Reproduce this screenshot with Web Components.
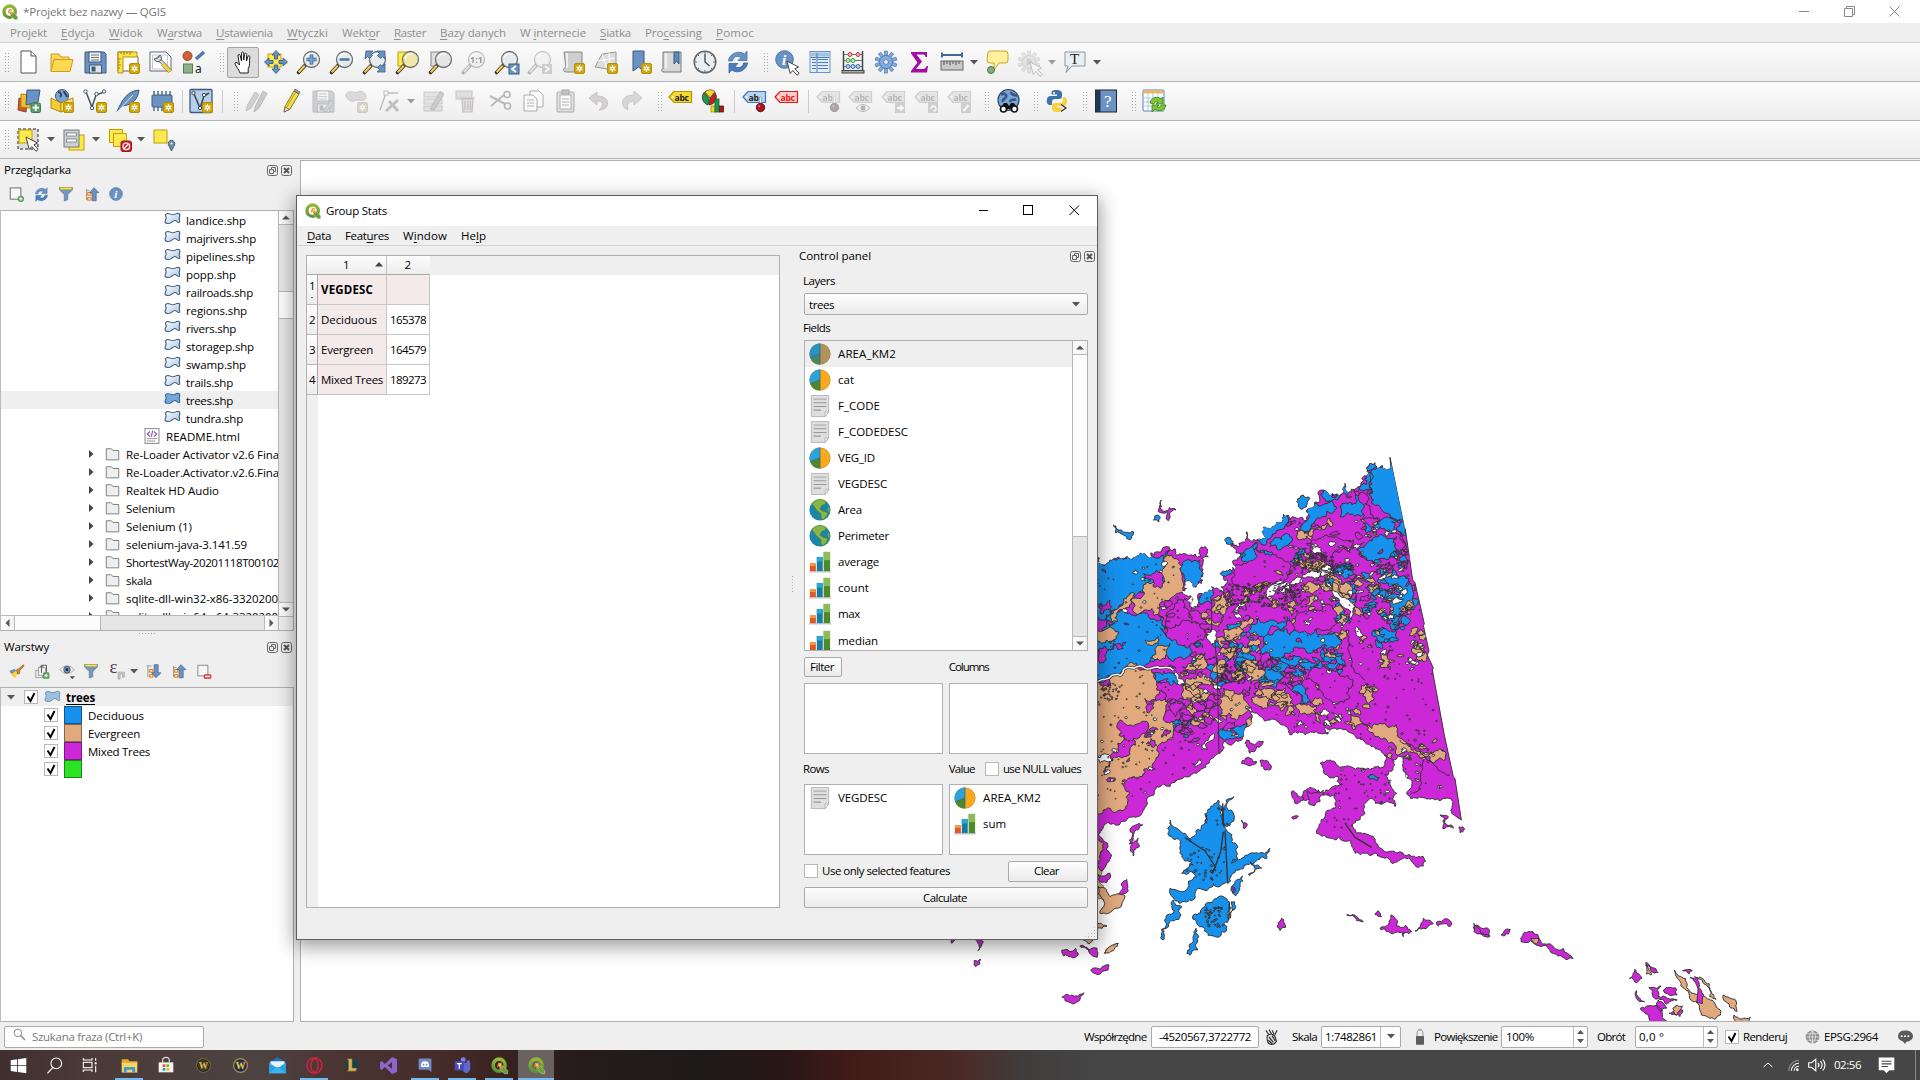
<!DOCTYPE html>
<html lang="pl"><head><meta charset="utf-8"><title>*Projekt bez nazwy — QGIS</title>
<style>
html,body{margin:0;padding:0;width:1920px;height:1080px;overflow:hidden;background:#efefef}
body{font:11.5px/16px "Open Sans","Noto Sans","Liberation Sans",sans-serif;color:#000}
</style></head><body>
<qg-desktop></qg-desktop>
<script>
const ctx=document.createElement('canvas').getContext('2d');
function define(name,css,html,after){
  customElements.define(name,class extends HTMLElement{
    connectedCallback(){
      if(this.shadowRoot)return;
      const r=this.attachShadow({mode:'open'});
      r.innerHTML='<style>*{box-sizing:border-box}'+css+'</style>'+(typeof html==='function'?html(this):html);
      if(after)after(this,r);
    }
  });
}
/* text run with a fixed advance width */
define('qg-text',':host{display:inline-block;white-space:pre;flex:none} ::slotted(u){text-underline-offset:2px;text-decoration-thickness:1px}','<slot></slot>',el=>{
  const w=+el.getAttribute('w'); if(!w)return;
  const cs=getComputedStyle(el),s=el.textContent;
  ctx.font=`${cs.fontWeight} ${cs.fontSize} ${cs.fontFamily}`;
  el.style.letterSpacing=((w-ctx.measureText(s).width)/s.length).toFixed(3)+'px';
  el.style.width=w+'px';
});
const T=(s,w,st='')=>`<qg-text w="${w}" style="${st}">${s}</qg-text>`;
/* row of [x, width, html] items laid out one after another */
function flow(items,x0=0){let e=x0,o='';for(const [x,w,h,st] of items){o+=`<div style="flex:none;display:flex;align-items:center;margin-left:${(x-e).toFixed(1)}px;width:${w}px;${st||''}">${h}</div>`;e=x+w}return o}

/* ---------- icons ---------- */
const P=(d,f='none',s='none',w=1,x='')=>`<path d="${d}" fill="${f}" stroke="${s}" stroke-width="${w}" ${x}/>`;
const R=(x,y,w,h,f='none',s='none',r=0,sw=1)=>`<rect x="${x}" y="${y}" width="${w}" height="${h}" rx="${r}" fill="${f}" stroke="${s}" stroke-width="${sw}"/>`;
const C=(x,y,r,f='none',s='none',w=1)=>`<circle cx="${x}" cy="${y}" r="${r}" fill="${f}" stroke="${s}" stroke-width="${w}"/>`;
const G=(op,s)=>`<g opacity="${op}" style="filter:grayscale(.85)">${s}</g>`;
const badge=R(13.5,13.5,10,10,'#d0a50d','#b58f00',1.5)+P('M18.5 15v7M15.5 16.8l6 3.4M21.5 16.8l-6 3.4','none','#fff',1.2)+C(18.5,18.5,1.9,'#fff')+C(18.5,18.5,.8,'#d0a50d');
const mag=(f='#e6ebee')=>P('M1.5 22.5l7-7.5','none','#333',3.6,'stroke-linecap="round"')+P('M1.7 22.2l6-6.4','none','#fcd04b',2)+C(14.5,9.5,8,f,'#6d6d6d',1.3)+P('M9 8a6 6 0 0 1 8-4','none','#fff',1.3);
const cur=(x,y)=>`<g transform="translate(${x} ${y})">`+P('M0 0l3.2 12.5 2.6-3 4.2 4.8 2.2-2-4.3-4.5 3.6-1.8z','#fff','#444',1)+'</g>';
const fold=P('M1 21V4h8l2 3h8v3','#fbd65b','#c99c25',1)+P('M1 21.5l3-12h19l-3 12z','#fcd94f','#c99c25',1);
const disk=P('M2 2h19l2 2v19H2z','#6a93c4','#3d5a7d',1)+R(6,2,12,10,'#f2f2f2','#3d5a7d')+P('M8 5h8M8 7.5h8M8 10h8','none','#777',1)+R(6.5,15,12,8,'#e4e4e4','#3d5a7d')+R(8.5,16.5,4,5,'#3d5a7d');
const tag=(f,s,c,t='abc')=>P('M1 8l5-5.5h17.5v11H6z',f,s,1.2)+C(4.6,8,1,'#fff')+`<text x="6.5" y="11.6" font-family="Open Sans" font-weight="700" font-size="8.6" fill="${c}" letter-spacing="-.3">${t}</text>`;
const therm=P('M17.5 8h2v7h-2z','#eee','#999',.7)+C(18.5,18.5,4.2,'#a01822','#7a1018')+C(17.3,17.3,1,'#e77');
const tblue='#6a93c4',dk='#3b5a80';
const sqb=R(14,14,10,10,'#999');
const gear=(c,s,r=9)=>{let o='';for(let i=0;i<10;i++)o+=`<rect x="-1.5" y="-${r+2}" width="3" height="6" fill="${c}" stroke="${s}" stroke-width=".6" transform="translate(12 12) rotate(${i*36})"/>`;return o+C(12,12,r-2.5,c,s,.8)+C(12,12,2.4,'#e8eef6',s,.8)};
const refresh=P('M2.5 11C3 4 12-.5 18.5 4l2.5-3v9.500h-9l3-3C11 5 7 7 6.500 11z',tblue,'#4774aa',.8)+P('M21.500 13c-.5 7-9.500 11.500-16 7L3 23v-9.500h9l-3 3c4 2.500 8 .5 8.500-3.500z','#4a7dba','#38669f',.8);
const pencil=P('M6 23l1-5.500L16 2l5 3L12 20z','#f2e04c','#8b7a14',1)+P('M8.500 18.500L17.500 3.500','none','#b49c1c',1)+P('M6 23l1-5 4.500 2.500z','#f3e3c5','#555',.7)+P('M16 2l5 3 1-2-5-3z','#999','#555',.6);
const globe=C(11.500,11,10.500,'#7ea4d2','#26486f',1.200)+P('M4 6c3-3 6 0 5 2s-4 2-3 5M14 3c0 3 4 3 6 4M19 10c-2 2-5-1-6 3','none','#37598a',2.600);
const Qi='<defs><linearGradient id="qg" x2="0" y2="1"><stop offset="0" stop-color="#94b83a"/><stop offset="1" stop-color="#5b9632"/></linearGradient></defs>'+C(11.500,11.500,8.500,'none','url(#qg)',5)+P('M12.500 12.500h4.500l6.500 6.500v4.500h-4.500l-6.500-6z','#6a9f37','#fff',.5)+P('M10 8h6l-3 3 4 4-2 2-4-4-2.500 2.500z','#ee8a3c')+C(13,11,2,'#f6c95a');
const PB='M3 3.500c4-3 7 2.500 11 1 3-1 4-3.500 7-2 2.500 1.500 1 5 .5 7.500s2 7 0 8-4-3.500-6-3.500c-3 0-5 5-8 5-2.500 0-5.500 1-6-2.500-.4-3 2-5 1.500-7.500C2.600 7 1 5 3 3.500z';
const pie=(a,b,g)=>C(12,12,11.500,b)+P('M12 12V.5A11.500 11.500 0 0 0 1.200 16z',a)+P('M12 12L1.200 16A11.500 11.500 0 0 0 12 23.500z',g)+P('M12 .5v23M12 12L1.200 16','none','#35607a',.8)+C(12,12,11.200,'none','#6a8a6a66',.8);
const IC={
 q:Qi,
 newf:P('M4 1h10l5 5v17H4z','#fff','#555',1)+P('M14 1v5h5','#eee','#555',1),
 open:fold, save:disk,
 layout:P('M2 2h15l5 5v14H2z','#fff','#666')+P('M2 2h19v5H7v16H2z','#fbe14c','#b89400')+P('M5 2v2M8 2v3M11 2v2M14 2v3M2 9h3M2 12h2M2 15h3M2 18h2','none','#8a6d00',.8)+badge,
 layman:P('M1 2h16l5 5v14H1z','#fff','#666')+R(3.5,5,15,14,'none','#b7c9e5')+P('M8 7l12 13','none','#666',3.500)+P('M8 7l12 13','none','#ddd',2)+P('M14 14l7 7.500','none','#a58a2a',4.500)+P('M14 14l7 7.500','none','#f0d050',3)+P('M5 9a4 4 0 0 0 6 2 4 4 0 0 0 0-6l-2 3z','#ddd','#555',1),
 style:C(5.500,6,4.500,'#cf6136','#9b4322')+P('M14 9l8-7','none','#4d79ad',3.500)+R(1.500,14,9,9,'#8bb18c','#567c57')+'<text x="13" y="22.500" font-family="Noto Sans" font-size="12" fill="#222">a</text>',
 hand:P('M9 23C8 19 3.500 15 4 13c1-1.300 3 0 4.500 2L7 6c-.2-2 1.700-2 2.200-.5L10.500 11V3.500c0-2 2.200-2 2.200 0V10l.8-5.500c.3-1.900 2.300-1.600 2.200.3L15.500 11l1.300-4.300c.5-1.700 2.200-1.200 2 .4-.7 5.400.6 8-1.600 11.700V23z','#fff','#111',.95),
 pan:R(4,4,13,13,'#fce94f','#c4a000')+[0,90,180,270].map(a=>`<g transform="rotate(${a} 12 12)">`+P('M12 .5l4 4.500h-2.500v4h-3V5H8z',tblue,dk,.9)+'</g>').join(''),
 zin:mag()+P('M14.500 4.500v10M9.500 9.500h10','none',dk,3.600)+P('M14.500 5v9M10 9.500h9','none','#7ba3d4',2),
 zout:mag()+P('M9.500 9.500h10','none','#4d79ad',2.600),
 zfull:mag()+P('M3 1h7L7.500 3.500l2 2-3 3-2-2L2 9zM22 1v8l-2.500-2.500-2 2-3-3 2-2L14 1zM22 22h-8l2.500-2.500-2-2 3-3 2 2L22 14z',tblue,dk,.8),
 zsel:R(2,2,12,14,'#fce94f','#c4a000')+mag('#efe8a8'),
 zlay:R(2,2,12,14,'#ddd','#888')+mag('#e4e4e4'),
 znat:G(.4,mag()+'<text x="8" y="13" font-weight="700" font-family="Open Sans" font-size="9">1:1</text>'),
 zlast:mag()+R(14,14,10,10,tblue,dk)+P('M21 16l-4 3 4 3','none','#fff',1.800),
 znext:G(.35,mag()+R(14,14,10,10,'#888')+P('M17 16l4 3-4 3','none','#fff',1.800)),
 nmap:P('M3 2h18v20H6c-5 0-4-5-1-4z','#cfcfcf','#888')+P('M6 3v15','none','#eee',2)+badge,
 n3d:P('M1 17L8 4l14-2v14l-9 3z','#ddd','#999')+P('M4 11l17-3M8 4l5 14M15 3l1 14','none','#fff',1)+badge,
 bm:P('M5 1h11v20l-5.500-4L5 21z',tblue,dk)+badge,
 bms:P('M3 2h18v20H4c-3 0-3-3-1-3z','#d8d8d8','#777')+P('M6 3v15','none','#f2f2f2',2)+P('M14 2h5v12l-2.500-3-2.500 3z','#5b8bc4',dk),
 clock:C(12,12,10.800,'#e9eef2','#666',1.500)+P('M12 4v8l4.500 4','none','#444',1.300)+P('M12 2v2M12 20v2M2 12h2M20 12h2M5 5l1 1M18 18l1 1M5 19l1-1M18 6l1-1','none','#568',1),
 refresh,
 ident:C(9.500,9.500,8.800,tblue,'#4774aa')+'<text x="7" y="15" font-family="Liberation Serif" font-style="italic" font-weight="700" font-size="15" fill="#fff">i</text>'+cur(12,11),
 attr:R(2,1.500,20,21,'#e2edf8',tblue)+R(3,2.500,18,4,'#a3c2e2')+P('M4 9.500h4M10 9.500h10M4 12.500h4M10 12.500h10M4 15.500h4M10 15.500h10M4 18.500h4M10 18.500h10M9 3v19M3 7.500h18','none','#4a7dba',1),
 abacus:P('M2.500 1v21M21.500 1v21','none','#444',1.500)+R(1,20.500,22,2.500,'#aaa','#444')+P('M3 4.500h18M3 10.500h18M3 16.500h18','none','#555',.8)+C(9,4.500,2,'#f9b5b5','#b33')+C(17,4.500,2,'#f9b5b5','#b33')+C(7,10.500,2,'#c3ecc3','#393')+C(12,10.500,2,'#c3ecc3','#393')+C(7,16.500,2,'#bcd6f2','#36a')+C(12,16.500,2,'#bcd6f2','#36a')+C(17,16.500,2,'#bcd6f2','#36a'),
 gear:gear('#83abdc','#4571a8'),
 sigma:P('M4 2h16v5h-1.500c-.5-2-1-2.500-3-2.500H9.500L15 11.500 9 19h7c2 0 3-1 3.500-3H21l-1 6.500H4V21l6.500-8.500L4 3.500z','#a30da3'),
 meas:P('M2 5h20M2 2.500v5M22 2.500v5','none','#45688f',2)+R(1,11,22,9,'#c9c9c9','#666')+P('M4 11v4M7 11v3M10 11v4M13 11v3M16 11v4M19 11v3','none','#555',1),
 tip:P('M3 2.500Q3 1 5 1h15q3 0 3 3v6q0 3-3 3h-6l-5 7v-7H5q-3 0-3-3z','#fdf1a0','#c9a520')+C(6,20,3.500,'#7fae7a','#4c7a4c'),
 act:G(.3,gear('#bbb','#777')+P('M10 8l6 4-6 4z','#777')+cur(13,12)),
 annot:P('M2 2h20v14H9l-6 6.500 2-6.500H2z','#e9eff3','#8b98a3')+'<text x="7" y="14" font-family="Liberation Serif" font-weight="400" font-size="15" fill="#222">T</text>',
 dsm:P('M2 9l8 2-1 12-8-2z','#cf5a28','#843')+P('M4 5l10 1-1 13-9-1z','#f0c02c','#a80')+P('M10 1h13l-2 12-12 3z',tblue,dk)+R(14,14,9.500,9.500,'#5a9e6d','#3d7a4e',1.500)+P('M18.700 15.500v6.500M15.500 18.700h6.500','none','#fff',1.800),
 gpkg:C(12,7,6.500,'#7ea4d2',dk)+P('M8 3c3 0 4 3 2 5M14 2c0 3 3 3 3 6','none','#26486f',2)+P('M1 9l10 5v9L1 19z','#f4c93a','#b08a10')+P('M11 14L23 9v9l-12 5z','#fbe66b','#b08a10')+badge,
 shp:P('M3 3l6 15 4-12 8-3','none','#456',1.500)+C(2.500,2.500,1.700,'#fff','#456')+C(9,19,1.700,'#fff','#456')+C(13.500,5,1.700,'#fff','#456')+C(21,2.500,1.700,'#fff','#456')+badge,
 feather:P('M1 23C6 10 12 2 23 1c-1 9-6 15-17 16z',tblue,dk)+P('M1 23L17 6','none','#dbe7f5',1)+badge,
 chip:R(2,6,20,12,tblue,dk,1)+P('M4 2v4M8 2v4M12 2v4M16 2v4M20 2v4M4 18v4M8 18v4M12 18v4','none',dk,1.300)+badge,
 vlay:R(1,.5,22,23,'#b8cde8',dk,1,1.300)+P('M5 5l6 14 4-12 5-3','none','#345',1.500)+C(4.500,4,1.700,'#fff','#345')+C(11,19,1.700,'#fff','#345')+C(15,6,1.700,'#fff','#345')+badge,
 pens:G(.5,P('M1 22l1.500-6L10 3l4 2.500-8 13.500z','#c5a5a5','#988')+P('M9 23l1.500-6L18 2l4 2.500L14 19z','#b99','#877')),
 pencil,
 dsave:G(.35,disk+P('M12 22l8-11 3 2-8 10z','#999','#555')),
 dpoly:G(.4,P('M2 5c5-5 8 0 12-2s8 1 8 5-4 4-7 3-5 2-8 1-6-5-5-7z','#a8b5a0','#787')+badge),
 node:G(.4,P('M3 21L9 4h12','none','#666',1.300)+R(7,2,4,4,'#fff','#666')+P('M9 22l12-11M12 12l9 10','none','#777',3)),
 mfeat:G(.4,R(2,3,18,5,'#c8ccaa','#886')+R(2,10,18,5,'#c8ccaa','#886')+R(2,17,18,5,'#c8ccaa','#886')+P('M8 20L18 3l4 2-10 16z','#a88','#766')),
 trash:G(.4,R(2,2,16,8,'#cbb','#977')+P('M5 9h16M8 10h11l-1 13H9zM11 12v9M14 12v9M16.500 12v9','#dbb','#a66',1.200)),
 cut:G(.45,P('M2 7l15 8M3 17L16 6','none','#777',2)+C(19.500,17,3,'none','#766',1.600)+C(19,5.500,3,'none','#766',1.600)),
 copy:G(.5,P('M9 2h9l4 4v12H9z','#fff','#666')+P('M3 6h9l4 4v12H3z','#fff','#666')+P('M6 11h7M6 14h7M6 17h7','none','#777',1)),
 paste:G(.5,R(3,3,17,20,'#ccc','#666',1)+R(6,6,11,14,'#fff','#777')+R(8,1,7,4,'#999','#555')+P('M8 10h7M8 13h7M8 16h7','none','#777',1)),
 undo:G(.35,P('M2 9l8-6v4c9 0 12 5 10 10-1 3-5 4-8 4 6-5 4-9-2-9v4z','#b87','#766')),
 redo:G(.35,P('M22 9l-8-7v4C5 6 1 11 3 16c1 3 3 4 5 5-2-5 1-9 6-9v4z','#8a8','#676')),
 abc:tag('#f5d830','#b89400','#222'),
 diag:P('M9 9V1.500A8 8 0 0 0 3 3.500z','#fcd520','#333',.6)+P('M9 9l5-6.500A8 8 0 0 0 4 3z','#fcd520','#333',.6)+P('M8 9.500L3 3.500A8 8 0 0 0 7 16z','#1a9a4a','#333',.8)+P('M9 9.500l5-6A8 8 0 0 1 8 16z','#d11c1c','#333',.8)+R(10,17,4,6,'#fcd520','#a80',0,.8)+R(14,10,4,13,'#1a9a4a','#063',0,.8)+R(18.500,17,4,6,'#b81414','#611',0,.8),
 abp:tag('#b9d4f3','#3f76c0','#222','ab')+therm,
 abr:tag('#ffc9c9','#e01b1b','#e01b1b'),
 l1:G(.4,tag('#cfcba0','#997','#555','ab')+therm),
 l2:G(.4,tag('#cfcba0','#997','#555')+P('M8 19q7-7 14 0-7 7-14 0z','#fff','#555')+C(15,19,2.500,'#555')),
 l3:G(.4,tag('#cfcba0','#997','#555')+sqb+P('M16 19h5M19 16.500l3 2.500-3 2.500','none','#fff',1.800)),
 l4:G(.4,tag('#cfcba0','#997','#555')+sqb+P('M17 20a2.500 2.500 0 1 1 2 2','none','#fff',1.600)),
 l5:G(.4,tag('#cfcba0','#997','#555')+sqb+P('M16.500 22l5-6','none','#fff',2)),
 meta:globe+P('M7 14h3l2 3 2-3h3l4 6H3z','#111')+C(6.500,20,3,'#fff','#111',1.600)+C(17.500,20,3,'#fff','#111',1.600),
 py:P('M10 1c-4.500 0-4.500 2-4.500 4.500H11V7H4C0 7-.5 16 3.500 16H6v-3c0-2 1-3 3-3h4c2 0 3-1 3-3V5c0-3-2-4-6-4z','#3b74ab')+P('M11 23c4.500 0 5-2 5-4.500h-5V17h7c4 0 4-9 .5-9H17v3c0 2-1 3-3 3H9c-2 0-3 1-3 3v2c0 3 2 4 5 4z','#fbd040')+C(8,4,1,'#fff')+P('M15 15.500l5 3.500-5 3.500','none','#333',1.300),
 help:R(1.500,1,21,22,tblue,'#222')+R(1.500,1,5,22,'#23364f')+'<text x="10" y="18" font-family="Liberation Serif" font-size="17" fill="#fff">?</text>',
 gs:R(1,1,21,21,'#fff','#4a86b8',1)+R(1.500,1.500,20,3,'#f5b45a')+P('M1 9h21M1 13h21M1 17h21M6 4v18M11 4v18M16 4v18','none','#a9cbe3',1)+P('M8 14c1-6 8-7 11-4l2-2v7h-7l2-2c-2-1-4 0-4 2z','#7dc832','#3f7d14',.8)+P('M24 16c-1 6-8 7-11 4l-3 3v-7h7l-2 2c2 1 4 0 4-2z','#7dc832','#3f7d14',.8),
 sel:R(1,1,20,20,'#ddd','#222').replace('/>',' stroke-dasharray="3 2"/>')+R(2,2,13,13,'#fce94f','#c4a000')+cur(9,9),
 form:R(7,7,15,15,'#fce94f','#c4a000')+R(2,2,15,17,'#ccd0d6','#6f7b86')+R(4.500,5,10,3,'#fff','#777',0,.8)+R(4.500,11,10,3,'#fff','#777',0,.8),
 desel:R(1.500,1.500,13,13,'#fce94f','#c4a000')+R(5.500,5.500,13,13,'#fce94f','#c4a000')+R(13,13,10.500,10.500,'#d8232a','#8e1217',2)+C(18.300,18.300,3.300,'none','#fff',1.200)+P('M16 20.700l4.500-4.700','none','#fff',1.200),
 selloc:R(2,2,13,13,'#fce94f','#c4a000')+P('M19.500 23l-3-6a3.300 3.300 0 1 1 6 0z','#6c8ea0','#486675')+C(19.500,15.500,1,'#fff'),
 addsel:R(2,1.500,17,18,'#f7f7f7','#777',0,1.700)+C(19,19,4.500,'#7ab07a','#3f7a3f')+P('M19 16.500v5M16.500 19h5','none','#fff',1.500),
 filter:P('M1 1h22v4l-8 8v9l-6 2V13L1 5z','#7397c0','#4b6c94')+R(2,1,20,3.500,'#fce94f','#b8a030'),
 coll:P('M4 3v18M4 6h5M4 18h5','none','#888',1.300)+R(6,9,5,4,'#fff','#f57900',0,1.700)+R(6,17,5,4,'#fff','#f57900',0,1.700)+P('M16 1l8 8h-4.500v13h-6.500V9h-4z',tblue,dk),
 expd:P('M1 3h8M3 3v18M4 12h4','none','#888',1.300)+R(6,9,5,4,'#fff','#f57900',0,1.700)+R(6,17,5,4,'#fff','#f57900',0,1.700)+P('M13 1h6.500v13h4.500l-8 8-7-8h4z',tblue,dk),
 info:C(12,12,11,tblue,'#4774aa')+'<text x="9" y="18.500" font-family="Liberation Serif" font-style="italic" font-weight="700" font-size="19" fill="#fff">i</text>',
 brush:P('M1 11l8-3 5 6-5 8z','#e8433a')+P('M3 17l8-7 4 5-6 7z','#fcd33a')+P('M1 11l8-3 2 3-8 4z','#5a9bd5')+P('M12 9l3-1 8-7 1 2-7 8v4l-3 1z','#d18b2f','#8a5312'),
 grp:R(3,10,11,12,'#eee','#777')+R(7,6,11,12,'#eee','#777')+P('M12 14V2M9 5l3-3 3 3M12 2h8v12','none','#556',1.500)+R(15,14,9,9,'#6fae74','#3f7a3f',1)+P('M19.500 16v5M17 18.500h5','none','#fff',1.500),
 eye:P('M1 10Q12-2 23 10 12 22 1 10z','#f3f3f3','#888')+C(12,10,5,'#6f94ba','#345')+C(12,10,2,'#123')+P('M16 20h8l-4 4z','#444'),
 eps:'<text x="-1" y="15" font-family="Liberation Serif" font-size="30" fill="#5b3566">ε</text>'+P('M13 13h10v8h-3v-5h-4v8h-3z','#ccc','#999'),
 rem:R(3,2,16,17,'#f7f7f7','#888',0,1.500)+R(13,17,11,6,'#e55','#b22',1)+P('M15 20h7','none','#fff',2),
 poly:`<defs><linearGradient id="pg" x2="1" y2="1"><stop offset="0" stop-color="#fff"/><stop offset="1" stop-color="#a9c5e3"/></linearGradient></defs>`+P(PB,'url(#pg)','#3f5a76',1.600),
 polysel:P(PB,'#70a9da','#2f5f8c',1.500),polylt:P(PB,'#9dc0e0','#5f85a8',1.400),
 folder:P('M2 3h8l3 3h9v16H2z','#eee','#777',1.500),
 html:R(1.500,1,21,22,'#fff','#777',0,1.300)+P('M9 5l-4 4 4 4M15 5l4 4-4 4M13 4l-2 9','none','#8a4fc4',1.700)+P('M4 16h16M4 19.500h13','none','#888',1.300),
 pie:pie('#2aa5dc','#fba81c','#4a8a2c'),pied:pie('#2294c8','#b0935a','#4a8560'),
 page:P('M2.500.5h19v18l-4 5h-15z','#dedede','#b5b5b5',1,'stroke-linejoin="round"')+P('M17.500 23.500v-5h4z','#f5f5f5','#aaa',.8)+P('M5 4.500h14','none','#b5b5b5',1.600)+P('M5 8.500h14M5 12.500h14M5 16.500h8','none','#989898',1.200),
 globe2:C(12,12,11.500,'#1b86a8')+P('M3 5C8-1 15-.5 19 3l-2 3-3 1-2 4 3 2 6 2-2 4-4 4-2-3 0-4-5-4-2-3z','#8ab648','#3d7a2c',.7)+P('M21 8l2 3-1 4-2-3z','#6ba23c'),
 bars:P('M0 22.500h24','none','#ccc',2)+R(1,13.500,6.500,8.500,'#e2572a')+R(1,13.500,6.500,3,'#f29a3f')+R(8.500,6.500,6.500,15.500,'#1a7ba3')+R(8.500,6.500,6.500,5,'#2ba7d4')+R(16,1,7,21,'#4c8a2a')+R(16,1,7,9,'#8dbb5a'),
 mg:C(9,9,7,'none','#888',1.800)+P('M14 14l8 8','none','#888',2.600),
 pos:P('M3 2l6 8M8 1l5 8M13 2l3 6M21 2l-4 7','none','#333',1.800)+P('M5 10q6-5 12 0l3 8q-2 5-8 5t-7-7z','#ddd','#333',1.800)+P('M8 12l7 8M13 10l5 8M7 17l6 5','none','#333',2),
 lock:P('M6 11V7a6 6 0 0 1 12 0v4','none','#aaa',2.500)+R(4,10.500,16,13,'#5e5e5e','none',1),
 crs:C(12,12,11,'#8a8a8a')+P('M1 12h22M12 1v22M3 6.500h18M3 17.500h18M12 1Q2 12 12 23M12 1Q22 12 12 23','none','#eee',1.200),
 msg:P('M12 1a11 9.500 0 1 1 2 19l-2 4-3-4.500A11 9.500 0 0 1 12 1z','#5a5a5a')+C(7,10.500,1.600,'#fff')+C(12,10.500,1.600,'#fff')+C(17,10.500,1.600,'#fff'),
 win:P('M1 4.500l9-1.300v8.300H1zM11.200 3L23 1.300v10.200H11.200zM1 12.700h9V21l-9-1.300zM11.200 12.700H23v10.200L11.200 21.200z','#fff'),
 tsearch:C(14.500,9,7.500,'none','#fff',1.500)+P('M9.500 15L2 23','none','#fff',1.700),
 tview:P('M2 1.500v3h13v-3M2 22.500v-3h13v3','none','#fff',1.600)+R(2,8,13,8,'none','#fff',0,1.600)+P('M20.500 1.500v4M20.500 13v10','none','#fff',1.600)+R(19,8,3,3,'#fff'),
 texp:P('M1 3h9l2 3h11v5H1z','#e8a92a')+P('M1 8h22v14H1z','#fcd462')+P('M4 22v-6q0-2 2-2h12q2 0 2 2v6h-4v-4H8v4z','#3f97dd'),
 store:P('M1 8h22v15H1z','#f3f3f3')+P('M7 8V5a5 4.500 0 0 1 10 0v3','none','#ddd',1.800)+R(7,11,4,4,'#f25022')+R(12.500,11,4,4,'#7fba00')+R(7,16.500,4,4,'#00a4ef')+R(12.500,16.500,4,4,'#ffb900'),
 wow:C(12,12,11,'#1f1c1a','#8b6c2d',1.600)+C(12,12,8,'#2a2d3a','#463')+'<text x="4.500" y="17" font-family="Liberation Serif" font-weight="700" font-size="15" fill="#f1c648" stroke="#b07a14" stroke-width=".4">W</text>',
 wow2:C(12,12,11,'#142f5c','#b08d3a',2)+'<text x="4" y="17.500" font-family="Liberation Serif" font-weight="700" font-size="16" fill="#ffd84a" stroke="#b07a14" stroke-width=".5">W</text>',
 mail:P('M0 8L12 0l12 8z','#1b6fbd')+P('M2 6h20v9H2z','#e8f3fb')+P('M0 8l12 8 12-8v15H0z','#2aa0e6')+P('M0 23l12-9 12 9z','#38b6f1'),
 opera:`<ellipse cx="12" cy="12" rx="10.500" ry="11" fill="none" stroke="#d2213f" stroke-width="2"/><ellipse cx="12" cy="12" rx="5" ry="9.500" fill="none" stroke="#d2213f" stroke-width="2"/>`,
 lol:C(13,12,10,'#11424f','#153')+P('M5 1h8v15h8l-2 5H5l2-3V4z','#d8b55e','#6c4f16'),
 vs:P('M17 0l7 3v18l-7 3L7 14l-4 4-3-1V7l3-1 4 4zM17 7l-6 5 6 5z','#9063cd','none',1,'fill-rule="evenodd"'),
 disc:P('M3 1h18q2 0 2 2v21l-5-4H3q-2 0-2-2V3q0-2 2-2z','#7289c9')+P('M5 14q0-5 2.500-7.500Q12 5 16.500 6.500 19 9 19 14q-2 2-4 1.500H9Q7 16 5 14z','#fff')+C(9.500,11.500,1.500,'#7289c9')+C(14.500,11.500,1.500,'#7289c9'),
 teams:C(20,7,2.500,'#6b74d6')+C(13,4,3.500,'#7b83eb')+P('M12 8h11v8q-1 6-6 7-5-2-6-7z','#6068cc')+R(1,6,13,13,'#464eb8','none',1)+P('M4 9.500h7M7.500 9.500v7','none','#fff',1.800),
 chev:P('M3 16l9-8 9 8','none','#fff',2),
 wifi:P('M3 22A19 19 0 0 1 22 4','none','#aaa',1.600)+P('M8 22A14 14 0 0 1 22 9M13 22a9 9 0 0 1 9-8','none','#fff',1.800)+C(19,20,2.500,'#fff'),
 vol:P('M1 8h4l6-6v20l-6-6H1z','none','#fff',1.600)+P('M14 8q3 4 0 8M17.500 5q5 7 0 14M21 2.500q6 9.500 0 19','none','#fff',1.600),
 note:P('M1 2h22v17h-7l-4 4-4-4H1z','#fff')+P('M5 7h14M5 10.500h14M5 14h9','none','#444',1.400)
};
define('qg-icon',':host{display:inline-flex;flex:none}svg{display:block;overflow:visible}',el=>{const s=el.getAttribute('s')||24;return `<svg width="${s}" height="${el.getAttribute('h')||s}" viewBox="0 0 24 24" preserveAspectRatio="none">${IC[el.getAttribute('n')]}</svg>`});
const I=(n,s=24,h)=>`<qg-icon n="${n}" s="${s}"${h?` h="${h}"`:''}></qg-icon>`;
const dots=(w,h)=>`<div style="width:${w}px;height:${h}px;background:radial-gradient(circle,#aaa 0.7px,transparent 1px) 0 0/3px 3px"></div>`;
const dn=(c='#555',w=8)=>`<svg width="${w}" height="5" viewBox="0 0 8 5"><path d="M0 0h8L4 4.500z" fill="${c}"/></svg>`;

/* ---------- toolbar ---------- */
const BARS={
 a:['|6.500','newf 29','open 62','save 95','layout 128','layman 161','style 194','|221','*hand 243','pan 276','zin 309','zout 342','zfull 375','zsel 408','zlay 441','znat 474','zlast 507','znext 540','nmap 573','n3d 606','bm 640','bms 672','clock 705','refresh 738','|765','ident 787','attr 820','abacus 853','gear 886','sigma 919','meas 952','v974','tip 997','act 1029','w1052','annot 1075','v1097'],
 b:['|6.500','dsm 29','gpkg 62','shp 95','feather 128','chip 162','!182','vlay 201','!222','|235','pens 257','pencil 290','dsave 323','dpoly 356','node 389','w411','mfeat 434','trash 466','cut 500','copy 533','paste 566','undo 599','redo 632','|659','abc 680','diag 713','!734','abp 754','abr 786','!808','l1 828','l2 860','l3 893','l4 926','l5 959','|986','meta 1009','|1035','py 1058','|1084','help 1106','|1133','gs 1154'],
 c:['|6.500','sel 29','v51','form 74','v96','desel 120','v141','selloc 164']};
define('qg-toolbar',':host{display:flex;flex:none;align-items:center;background:linear-gradient(#fbfbfb,#eee);border-bottom:1px solid #b4b4b4}',el=>flow(BARS[el.getAttribute('set')].map(t=>{
  const k=t[0];
  if(k==='|')return[+t.slice(1)-2.500,5,dots(5,21)];
  if(k==='!')return[+t.slice(1),1,'','height:23px;background:#ccc'];
  if(/^v\d/.test(t))return[+t.slice(1)-4,8,dn()];
  if(/^w\d/.test(t))return[+t.slice(1)-4,8,dn('#999')];
  let[n,x]=t.split(' ');
  if(k==='*')return[+x-16,32,I('hand'),'background:#dcdcdc;border:1px solid #a2a2a2;border-radius:2px;height:31px;justify-content:center'];
  return[+x-12,24,I(n)];
})));
/* ---------- menus ---------- */
const MENUS={main:[[10,37,'Pro<u>j</u>ekt'],[61,34,'<u>E</u>dycja'],[109,34,'<u>W</u>idok'],[157,45,'W<u>a</u>rstwa'],[216,57,'<u>U</u>stawienia'],[287,41,'<u>W</u>tyczki'],[342,38,'Wekt<u>o</u>r'],[394,32,'<u>R</u>aster'],[440,66,'<u>B</u>azy danych'],[520,66,'W <u>i</u>nternecie'],[600,31,'<u>S</u>iatka'],[645,57,'Pro<u>c</u>essing'],[716,38,'<u>P</u>omoc']],
 dlg:[[10,24,'<u>D</u>ata'],[48,44,'Feat<u>u</u>res'],[106,44,'W<u>i</u>ndow'],[164,25,'He<u>l</u>p']]};
define('qg-menubar',':host{display:flex;flex:none;align-items:center;background:#efefef;border-bottom:1px solid #d3d3d3}',el=>flow(MENUS[el.getAttribute('set')].map(m=>[m[0],m[1],T(m[2],m[1])])));
/* ---------- small controls ---------- */
define('qg-dockbtns',':host{display:flex;gap:3px}','<svg width="11" height="11"><rect x=".5" y=".5" width="10" height="10" rx="2" fill="none" stroke="#666"/><path d="M4.500 4.500v-2h4v4h-2M2.500 4.500h4v4h-4z" fill="none" stroke="#666"/></svg><svg width="11" height="11"><rect x=".5" y=".5" width="10" height="10" rx="2" fill="none" stroke="#666"/><path d="M3 3l5 5M8 3L3 8" stroke="#555" stroke-width="2"/></svg>');
define('qg-check',':host{display:block;flex:none;width:14px;height:14px;background:#fff;border:1px solid #b8b8b8}svg{display:block}',el=>el.hasAttribute('on')?'<svg width="12" height="12"><path d="M2.500 5.500l3 4.500L9.500 2" fill="none" stroke="#000" stroke-width="1.900"/></svg>':'');
define('qg-scroll',`:host{display:flex;flex:none;background:#e6e6e6}
 .b{flex:none;background:linear-gradient(90deg,#fff,#f1f1f1);display:flex;align-items:center;justify-content:center}.t{background:#fcfcfc;flex:none}
 :host([v]){flex-direction:column;width:15px;border-left:1px solid #b8b8b8}:host([v]) .b{height:14px}:host([v]) .b:first-of-type,:host([v]) .t{border-bottom:1px solid #b8b8b8}:host([v]) .b:last-of-type,:host([v]) .t.m{border-top:1px solid #b8b8b8}
 :host([h]){height:15px;border-top:1px solid #b8b8b8}:host([h]) .b{width:14px}:host([h]) .b:first-of-type,:host([h]) .t{border-right:1px solid #b8b8b8}:host([h]) .b:last-of-type{border-left:1px solid #b8b8b8}`,el=>{
 const v=el.hasAttribute('v'),o=+el.getAttribute('o'),t=el.getAttribute('t'),d=v?'height':'width';
 const a=v?['M0 4.500h8L4 .5z','M0 .5h8L4 4.500z']:['M5.500 0v8L1.500 4z','M1.500 0v8l4-4z'];
 return `<div class="b"><svg width="8" height="${v?5:8}"><path d="${a[0]}" fill="#555"/></svg></div><i style="flex:none;${d}:${o}px"></i><div class="t ${o?'m':''}" style="${d}:${t}px"></div><i style="flex:1"></i><div class="b"><svg width="8" height="${v?5:8}"><path d="${a[1]}" fill="#555"/></svg></div>`});
/* ---------- docks ---------- */
const dockCss=`:host{display:flex;flex-direction:column;flex:none;width:294px}
 .h{height:22px;display:flex;align-items:center;justify-content:space-between;padding:0 2px 0 4px;flex:none}.tb{height:26px;margin-bottom:3px;display:flex;align-items:center;flex:none}
 .box{flex:1;border:1px solid #b0b0b0;border-left-color:#bbb;background:#fff;display:flex;overflow:hidden;min-height:0}.r{display:flex;align-items:center;height:18px;flex:none}.rows{flex:1;overflow:hidden;min-width:0}.r.s{background:#efefef}.r qg-text{margin-top:2px}`;
const SH=[['landice.shp',60],['majrivers.shp',70],['pipelines.shp',69],['popp.shp',50],['railroads.shp',67],['regions.shp',61],['rivers.shp',50],['storagep.shp',68],['swamp.shp',60],['trails.shp',47],['trees.shp',47],['tundra.shp',57]];
const FD=[['Re-Loader Activator v2.6 Fina',153],['Re-Loader.Activator.v2.6.Fina',153],['Realtek HD Audio',93],['Selenium',49],['Selenium (1)',66],['selenium-java-3.141.59',121],['ShortestWay-20201118T00102',153],['skala',26],['sqlite-dll-win32-x86-3320200',152],['sqlite-dll-win64-x64-3320200',152]];
define('qg-browser',dockCss+'.col{flex:1;display:flex;flex-direction:column;min-width:0}',()=>`<div class="h">${T('Przeglądarka',67)}<qg-dockbtns></qg-dockbtns></div>
 <div class="tb">${flow([[8.500,15,I('addsel',15)],[33.500,15,I('refresh',15)],[59,14,I('filter',14)],[84,15,I('coll',15)],[109,14,I('info',14)]])}</div>
 <div class="box"><div class="col"><div class="rows">${SH.map(([s,w],i)=>`<div class="r ${i===10?'s':''}">${flow([[163,16,I(i===10?'polysel':'poly',17,14),'margin-top:-2px'],[185,w,T(s,w)]])}</div>`).join('')}
 <div class="r">${flow([[143,16,I('html',16)],[165,74,T('README.html',74)]])}</div>
 ${FD.map(([s,w])=>`<div class="r">${flow([[88,5,'<svg width="5" height="8"><path d="M0 0v8l4.500-4z" fill="#444"/></svg>'],[104,14,I('folder',15,14)],[125,w,T(s,w)]])}</div>`).join('')}</div>
 <qg-scroll h o="0" t="86"></qg-scroll></div><div style="display:flex;flex-direction:column"><qg-scroll v o="66" t="28" style="flex:1"></qg-scroll><div style="height:14px;background:#efefef;border-top:1px solid #b8b8b8;border-left:1px solid #b8b8b8"></div></div></div>`);
define('qg-layers',dockCss+'.w{width:18px;height:18px;border:1px solid #0006}',()=>`<div class="h">${T('Warstwy',45)}<qg-dockbtns></qg-dockbtns></div>
 <div class="tb">${flow([[8.500,15,I('brush',15)],[34,14,I('grp',15)],[59,16,I('eye',16)],[84,14,I('filter',14)],[109.500,15,I('eps',15)],[130,8,dn()],[146,15,I('expd',15)],[171,15,I('coll',15)],[196,15,I('rem',15)]])}</div>
 <div class="box"><div class="rows"><div class="r s">${flow([[6,8,dn()],[23,14,'<qg-check on></qg-check>'],[43,16,I('polylt',17,14)],[65,30,T('<u>trees</u>',29,'font-weight:700')]])}</div>
 ${[['#1791ee','Deciduous',56],['#e1a97e','Evergreen',52],['#cc28d8','Mixed Trees',62],['#2be324','',0]].map(([c,s,w])=>`<div class="r">${flow([[43,14,'<qg-check on></qg-check>'],[63,18,`<div class="w" style="background:${c}"></div>`],[87,w,s?T(s,w):'']])}</div>`).join('')}</div></div>`);
/* ---------- map ---------- */
let seed=7;const rnd=()=>{seed=(seed*1664525+1013904223)>>>0;return seed/4294967296};
function jagPts(p,k,min,closed){
  const out=[];
  const rec=(a,b)=>{const dx=b[0]-a[0],dy=b[1]-a[1],L=Math.hypot(dx,dy);if(L<min){out.push(a);return}
    const r=(rnd()-.5)*2*k,m=[(a[0]+b[0])/2-dy*r,(a[1]+b[1])/2+dx*r];rec(a,m);rec(m,b)};
  const n=closed?p.length:p.length-1;
  for(let i=0;i<n;i++)rec(p[i],p[(i+1)%p.length]);
  if(!closed)out.push(p[p.length-1]);
  return out.map(q=>q[0].toFixed(1)+' '+q[1].toFixed(1)).join('L');
}
const jag=(p,k=.2,min=9)=>'M'+jagPts(p,k,min,true)+'Z';
const pts=s=>{const n=s.trim().split(/[ ,]+/).map(Number),o=[];for(let i=0;i<n.length;i+=2)o.push([n[i],n[i+1]]);return o};
const many=(s,k,f=q=>q,min)=>s.trim().split(/[;\n]+/).filter(x=>x.trim()).map(l=>jag(pts(l).map(f),k,min)).join('');
const lines=(s,k)=>s.split(';').map(l=>'M'+jagPts(pts(l),k,9)).join('');
const c12=q=>[q[0]*1.626-450,1380+q[1]];
function blobs(zs){let d='';for(const[x0,y0,x1,y1,n,r0,r1]of zs)for(let i=0;i<n;i++){
  const x=x0+rnd()*(x1-x0),y=y0+rnd()*(y1-y0),r=r0+rnd()*rnd()*(r1-r0),small=r<6,e=small?.8:.35+rnd()*.5,a=small?0:-.9+rnd()*1.6,m=small?6:9,p=[];
  for(let j=0;j<m;j++){const t=j/m*6.283,q=r*(small?.8+rnd()*.4:.4+rnd()*1.1),u=Math.cos(t)*q,v=Math.sin(t)*q*e;p.push([x+u*Math.cos(a)-v*Math.sin(a),y+u*Math.sin(a)+v*Math.cos(a)])}
  d+=r>8?jag(p,.3,7):'M'+p.map(q=>q[0].toFixed(1)+' '+q[1].toFixed(1)).join('L')+'Z'}return d}
const NORTH=`0,350 20,345 40,375 60,360 100,355 150,340 200,335 240,328 260,345 300,345 345,320 355,350 335,355 340,400 335,430 310,440 285,430 295,470 300,500 325,500 330,460 365,440 400,460 410,430 405,400 440,385 450,340 425,310 470,275 500,300 520,262 580,222 600,240 640,240 650,210 690,180 700,150 765,130 775,160 800,145 820,110 860,85 890,90`;
const SOUTH=`1085,1120 1090,1085 1050,1082 980,1075 950,1060 965,1020 940,950 905,960 890,1010 920,1060 915,1100 880,1090 840,1075 825,1120 790,1150 800,1180 860,1210 880,1230 930,1235 1000,1250 1000,1278 910,1270 860,1240 795,1240 750,1190 680,1180 705,1130 735,1065 640,1080 640,1055 750,1035 745,1010 700,995 690,970 720,960 760,980 810,985 870,985 890,955 870,930 820,900 770,870 730,865 690,880 600,885 580,855 540,840 480,820 470,860 460,890 400,905 390,940 360,960 340,985 310,1000 260,1020 240,1040 200,1040 170,1080 130,1130 70,1150 40,1160 30,1190 60,1240 50,1270 40,1290 30,1330 50,1370 0,1400`;
const BLUE=`0,350 20,350 40,378 60,360 100,357 150,340 240,330 225,350 245,380 225,395 215,440 150,455 110,485 80,520 50,540 0,480
0,600 50,560 100,510 150,520 215,530 235,590 300,615 305,640 250,665 180,660 150,680 70,715 0,722
280,365 330,360 340,400 325,440 290,435 280,400
330,455 370,450 365,490 330,495
450,340 545,335 545,360 460,365
410,555 450,545 450,565 415,570;480,560 530,545 590,530 600,540 540,565 510,590
440,650 480,630 510,680 480,700 440,685;500,710 560,690 610,690 590,715 510,730
700,640 760,640 740,680 700,670;180,700 230,700 265,720 290,740 200,725
360,690 440,700 440,720 370,740;600,730 640,740 670,790 630,790
760,430 800,450 800,480 760,460
750,525 780,530 780,550 750,545;240,860 290,835 290,850 235,890;385,885 470,850 455,892 420,895
850,570 920,575 920,600 860,598;530,660 560,640 590,660 620,650 660,665 600,680`;
/* the larger deciduous stands, kept above the scattered patches */
const BLUE2=`843,150 860,85 905,60 943,235 900,235 870,200 845,190
805,150 830,100 850,110 845,160
700,150 765,130 775,160 740,180 700,175
640,250 680,190 730,190 740,205 690,235 660,275 630,270
750,200 800,160 830,200 800,225 750,230
820,250 880,235 943,240 950,285 900,280 870,260 830,280
800,330 850,295 920,290 925,330 900,350 870,355 830,360
890,395 930,410 965,440 965,500 905,525 890,470 915,440
550,300 590,280 600,310 570,330 540,320
500,300 520,265 570,230 585,225 590,250 545,290 530,310
520,600 560,570 640,570 700,585 755,600 745,615 680,630 600,640 540,640 510,630
720,380 780,375 790,400 740,405 720,395`;
const TAN=`120,480 160,445 225,425 220,350 245,345 275,380 280,430 250,470 210,490 215,530 150,520
60,560 70,520 100,490 135,462 80,520;0,565 60,560 85,575 70,600 0,600
0,730 90,700 170,685 200,730 220,760 225,820 240,830 250,880 200,930 160,990 110,1020 120,1060 90,1110 40,1110 0,1160
165,600 205,590 205,610 180,615;320,535 350,515 370,480 400,460 420,500 385,560 350,545
400,570 460,575 450,600 420,600;620,290 640,270 720,235 725,260 660,295 630,300
640,430 700,420 750,430 800,480 790,510 740,470 690,440
590,490 650,480 610,500 605,530;400,760 480,740 480,800 440,840 390,830
490,760 580,750 600,790 680,800 690,850 640,820 570,810
870,640 910,630 900,690 870,680;780,820 870,850 940,900 1000,940 1065,935 1065,960 1000,950 920,945 860,890 790,870
280,730 360,715 370,790 340,850 290,810;620,345 700,370 690,390 630,380
700,400 740,410 790,480 760,470;820,740 850,750 835,790;400,650 440,620 430,660
480,600 505,590 500,640 480,630;200,620 240,610 230,640 180,655;980,640 1010,640 1005,665 985,660
590,700 640,695 630,730 600,720;0,1180 40,1230 30,1290 60,1370 105,1370 100,1395 60,1420 0,1435`;
const MAG2=`160,400 200,390 220,410 210,445 190,440 190,420 165,415;20,490 60,480 65,500 30,520
80,860 90,840 130,860 175,850 165,880 120,930 60,980 40,995 80,940 110,900
165,775 215,750 220,780 180,795;220,840 270,800 265,840 240,850
30,625 90,610 100,625 50,640 30,670;280,480 330,545 220,560 235,515`;
const MAG3=`790,140 835,170 840,210 870,245 820,240 815,190;905,245 935,245 920,270 950,330 950,355 920,350 945,320 905,275
450,375 560,350 600,370 600,400 540,430 440,440 425,415;650,310 740,290 790,300 740,330 720,365 660,345
230,560 280,540 330,560 345,590 310,612 240,595;620,510 700,490 740,520 740,550 670,580 610,550
660,680 720,690 790,720 780,770 700,760 650,720`;
const ISL_B=`70,255 95,270 130,275 125,295 100,285;190,240 205,225 207,246;620,185 640,165 660,175 640,205;408,295 430,305 425,320 410,312
828,85 855,68 860,80 835,92;390,400 420,388 425,402 400,408
240,1140 262,1165 300,1205 310,1190 322,1168 332,1172 345,1120 350,1150 370,1095 385,1080 392,1120 410,1170 425,1205 425,1270 500,1238 540,1225 500,1262 430,1300 415,1330 370,1330 330,1345 270,1390 240,1345 290,1350 320,1310 275,1300 310,1275 290,1262 270,1240 245,1190
398,1150 400,1105 432,1070 412,1105 432,1125 410,1160;250,1380 275,1400 270,1430 240,1445 220,1500 228,1430
310,1425 345,1400 385,1370 420,1400 410,1470 385,1492 335,1460;318,1465 327,1490 315,1515 322,1530 300,1546 290,1540 305,1510
435,1325 458,1308 450,1335 438,1367 430,1360;425,1385 434,1385 428,1410 420,1435;480,1265 515,1284 485,1275
925,1465 950,1470 940,1490`;
const ISL_M=`214,180 220,215 258,210 235,242 230,215 205,215;470,900 520,905 500,920 480,940 470,920;455,970 480,955 500,965 480,978;510,962 535,965 540,990 525,990
455,1140 470,1150 460,1165;475,1303 495,1288 480,1306;575,1435 587,1462 570,1472;605,1132 625,1128 610,1138;608,1052 640,1072 615,1090
1050,1125 1075,1130 1060,1140 1070,1155 1090,1165 1058,1165;1108,1160 1124,1168 1110,1178;770,1425 800,1430 820,1445 800,1442;855,1424 865,1412 874,1430
870,1465 895,1455 903,1425 912,1430 918,1458 965,1475 930,1478;975,1473 992,1455 1000,1435 1030,1450 1000,1465;1040,1446 1085,1452 1080,1460 1045,1458;1150,1462 1160,1455 1200,1490 1170,1478
120,1168 158,1155 130,1185 118,1212;145,1195 148,1220 130,1248;110,1318 114,1340 90,1375 78,1368 95,1350;650,1055 700,1050 690,1085 655,1090
20,1300 60,1300 60,1315 30,1325;425,1340 435,1345 428,1360`;
const FAR_M=`985,70 1015,108 985,95;1035,105 1052,88 1040,108;1072,125 1085,95 1110,130 1150,145 1168,175 1130,160 1105,137;1272,235 1282,208 1295,235 1285,248;1302,188 1325,218 1312,215;1285,272 1300,305 1285,295
1308,262 1330,258 1325,290 1360,300 1340,312 1315,290;1292,325 1325,320 1342,368 1310,368;1370,212 1388,212 1382,222;1335,270 1358,265 1360,285 1345,285;1345,340 1370,330 1365,350;1325,300 1340,325 1330,335
225,150 250,145 255,165 228,168;258,138 290,145 290,172 275,158;278,210 312,195 310,210 282,218;225,292 265,278 240,308;65,118 80,125 70,152;63,182 75,178 66,200;17,115 28,115 22,130`;
const FAR_T=`1090,115 1105,115 1100,132;1302,195 1312,225 1303,222;1355,210 1375,235 1390,280 1412,290 1440,345 1430,358 1405,345 1385,300;1392,230 1410,240 1432,298 1420,290;1445,285 1468,300 1470,335 1450,305;1465,345 1495,352 1488,366 1468,366;1352,325 1370,318 1360,345;303,160 328,132 312,152;260,112 282,120 275,132;285,70 308,78 290,84`;
const FAR_M2=`1384,233 1394,232 1400,262 1407,310 1396,308 1398,280`;
define('qg-map',':host{display:block;overflow:hidden;background:#fff}svg{display:block}',()=>{
  const b='#1791ee',t='#e1a97e',m='#cc28d8';
  const edge='L903 85 900 52 943 262 946 268 968 420 975 428 1003 552 1000 556 1017 633 1012 645 1030 684 1027 690 1063 885 1090 1010 1095 1016 1114 1140L';
  const land='M'+jagPts(pts(NORTH),.42,8)+edge+jagPts(pts(SOUTH),.26,8)+'Z';
  const g=(d,f,x='')=>`<path d="${d}" fill="${f}" ${x}/>`;
  const wide=many(`425,517 470,485 530,465 575,430 650,400 695,396 690,406 655,410 600,432 545,468 500,488 440,512
690,398 712,375 722,380 700,410;770,325 800,312 822,306 800,325 775,332;706,425 722,430 745,458 778,480 798,498 790,510 786,540 778,510 745,475
800,560 820,588 812,590 795,570;345,708 365,730 395,745 370,745;355,600 350,580 365,568 382,575 378,600 365,612;335,930 345,905 370,880 372,895 350,930
305,970 330,958 335,965 315,982;20,955 60,948 65,962 30,968;290,480 310,470 328,500 300,500;255,690 265,715 285,733 268,735 252,705`,.28,undefined,7);
  const thin=lines('20,724 60,712 90,706 150,678;150,678 210,684 250,690;560,430 575,425',.2);
  return `<svg width="1619" height="860" viewBox="301 161 1619 860"><defs><clipPath id="l"><path d="${land}"/></clipPath></defs>
  <g transform="translate(1090 440) scale(.33333)" stroke="#333" stroke-width="2.900" stroke-linejoin="round">
  ${g(land,m)}<g clip-path="url(#l)">
  ${g(many(BLUE,.34),b)}${g(many(TAN,.34),t)}${g(many(MAG2,.34),m)}
  ${g(blobs([[840,330,960,560,24,9,34],[480,640,780,720,14,10,34],[380,280,640,350,6,9,24],[300,600,500,740,16,9,32],[700,370,880,560,18,8,28],[850,560,960,620,8,7,20],[400,580,500,680,6,9,28],[230,840,330,890,3,8,20]]),b)}
  ${g(blobs([[290,600,500,880,28,10,42],[480,400,860,560,30,9,34],[640,240,900,420,12,7,24],[700,570,1010,680,16,7,22],[500,730,860,860,24,8,34],[880,900,1060,960,8,7,20],[380,450,480,620,10,8,28]]),t)}
  ${g(blobs([[220,480,480,900,30,9,38],[480,640,760,740,20,9,36],[560,240,940,560,30,8,30],[30,380,220,700,4,6,18],[150,770,330,940,14,9,36],[60,950,120,1100,3,6,16],[880,400,970,560,8,7,22]]),m)}
  ${g(many(BLUE2,.34),b)}${g(many(MAG3,.34),m)}
  ${g(blobs([[730,150,900,290,8,6,14],[860,310,960,460,14,7,20],[560,590,760,640,4,6,12]]),m)}${g(blobs([[860,330,960,520,14,6,16],[840,250,900,290,4,6,12],[560,360,640,430,4,6,16]]),t)}
  ${g(blobs([[580,240,940,460,30,4,15],[400,400,860,620,28,3,12],[280,560,560,900,30,3,13],[560,620,1010,700,14,3,10],[630,780,780,880,14,4,20],[870,380,970,540,20,3,14],[20,720,330,1080,22,3,12],[900,930,1060,1060,12,4,16],[700,960,920,1110,7,3,8],[100,360,330,560,10,4,12],[960,600,1010,690,7,5,16]]),'#fff')}
  ${g(wide,'#fff')}${g(thin,'none','stroke-width="9"')}${g(thin,'none','stroke="#fff" stroke-width="4.500"')}
  ${g(blobs([[20,350,1010,900,260,1.500,4],[400,430,640,500,170,1.500,6],[610,340,730,400,100,2,6],[390,670,470,730,70,2,5],[30,730,90,780,40,2,4],[720,370,790,400,40,2,6],[700,1000,900,1180,60,1.500,4],[20,900,330,1080,55,1.500,4],[870,700,1060,1060,36,1.500,5]]),'none')}
  <path d="M375 600L382 700 387 940M365 480v90" fill="none"/>
  ${g(lines('1000,960 995,1030 960,1065;770,570 785,660 825,720;930,900 990,930 1040,980 1080,1005;520,715 560,718 600,745 640,790',.2),'none')}
  </g>
  ${g(many(ISL_B,.3,undefined,8),b)}${g(many(ISL_M,.28,undefined,8),m)}${g(many(FAR_M,.24,c12,8),m)}${g(many(FAR_T,.22,c12,8),t)}${g(many(FAR_M2,.2,c12,8),m)}
  ${g(many('45,1540 85,1510 62,1535;60,1370 105,1368 95,1395 30,1420 25,1340',.2),t)}
  ${g(blobs([[345,1400,400,1460,45,2,5],[290,1220,410,1320,38,2,5],[380,1090,415,1160,10,2,5]]),'none')}
  ${g(many('832,1010 850,1003 868,1012 862,1022 840,1018',.2),b)}
  <path d="M405 1172l8 156M398 1090l3 70M285 1193l60 40 32 48-14 18M400 1175l-8 60-22 60M765 1150l30 42 50 30M418 1390l-2 50" fill="none" stroke-width="4"/>
  </g></svg>`});
/* ---------- Group Stats window ---------- */
define('qg-item',':host{display:flex;align-items:center;height:26.050px;padding-left:4px;gap:7px}:host([sel]){background:#efefef}',el=>`${I(el.getAttribute('i'),22)}<qg-text w="${el.getAttribute('w')}">${el.getAttribute('t')}</qg-text>`);
const it=(i,t,w,s='')=>`<qg-item i="${i}" t="${t}" w="${w}" ${s}></qg-item>`;
define('qg-stat-table',`:host{display:flex;flex:none;flex-direction:column;width:474px;height:653px;border:1px solid #b0b0b0;background:#fff}
 .hd{height:19px;display:flex;background:#efefef;flex:none}.hd>div{background:linear-gradient(#fdfdfd,#ededed);border-right:1px solid #c3c3c3;border-bottom:1px solid #a8a8a8;display:flex;align-items:center;justify-content:center}
 .r{display:flex;height:30px;flex:none}.n{width:11px;background:linear-gradient(#fdfdfd,#ededed);border-right:1px solid #a8a8a8;border-bottom:1px solid #b8b8b8;display:flex;align-items:center;justify-content:center}
 .c{border-right:1px solid #c6c6c6;border-bottom:1px solid #c6c6c6;display:flex;align-items:center;padding-left:3px}.p{background:#f5eaea}.rest{flex:1;width:11px;background:#efefef}`,()=>`
 <div class="hd"><div style="width:80px;padding-left:36px;justify-content:flex-start;gap:26px">${T('1',6)}<svg width="8" height="5" style="margin-top:-2px"><path d="M0 4.500h8L4 0z" fill="#444"/></svg></div><div style="width:43px;border-right:0;padding-right:2px">${T('2',6)}</div></div>
 ${[['VEGDESC',52,'',0],['Deciduous',56,'165378',36],['Evergreen',52,'164579',36],['Mixed Trees',62,'189273',36]].map(([a,w,v,x],i)=>`<div class="r"><div class="n" ${i?'':'style="flex-direction:column;line-height:12px;justify-content:flex-start;padding-top:5px"'}>${T(i+1,6)}${i?'':'<i style="width:2px;height:1px;background:#666;margin-top:5px"></i>'}</div><div class="c p" style="width:69px">${T(a,w,i?'':'font-weight:700')}</div><div class="c ${i?'':'p'}" style="width:43px">${v?T(v,x):''}</div></div>`).join('')}<div class="rest"></div>`);
define('qg-control-panel',`:host{display:flex;flex-direction:column;width:297px;flex:none}
 .h{height:20px;display:flex;align-items:center;justify-content:space-between;padding-right:2px;margin-left:-1px}.in{padding:0 10px 0 4px;display:flex;flex-direction:column;width:298px}
 .l{display:flex;align-items:center}.bx{width:139px;height:71px;border:1px solid #b0b0b0;background:#fff}.two{display:flex;justify-content:space-between;height:71px}
 .btn{background:linear-gradient(#fdfdfd,#ebebeb);border:1px solid #aaa;border-radius:2px;display:flex;align-items:center;justify-content:center}
 .list{height:311px;border:1px solid #b0b0b0;background:#fff;display:flex;overflow:hidden}`,()=>`
 <div class="h">${T('Control panel',72)}<qg-dockbtns></qg-dockbtns></div>
 <div class="in"><div class="l" style="height:27px;padding-top:3px">${T('Layers',32,'margin-left:-1px')}</div>
 <div class="btn" style="height:22px;justify-content:space-between;padding:1px 7px 0 4px">${T('trees',25)}${dn()}</div>
 <div class="l" style="height:25px">${T('Fields',27,'margin-left:-1px')}</div>
 <div class="list"><div style="flex:1">${it('pied','AREA_KM2',58,'sel')}${it('pie','cat',16)}${it('page','F_CODE',42)}${it('page','F_CODEDESC',70)}${it('pie','VEG_ID',37)}${it('page','VEGDESC',49)}${it('globe2','Area',24)}${it('globe2','Perimeter',51)}${it('bars','average',41)}${it('bars','count',31)}${it('bars','max',22)}${it('bars','median',40)}</div><qg-scroll v o="0" t="182"></qg-scroll></div>
 <div class="l" style="height:32px">${flow([[0,38,T('Filter',24),'height:20px;background:linear-gradient(#fdfdfd,#ebebeb);border:1px solid #aaa;border-radius:2px;padding-left:5px'],[144.700,40,T('Columns',40)]])}</div>
 <div class="two"><div class="bx"></div><div class="bx"></div></div>
 <div class="l" style="height:30px">${flow([[-1,26,T('Rows',26)],[144.700,26,T('Value',26)],[181,14,'<qg-check></qg-check>'],[199,78,T('use NULL values',78)]])}</div>
 <div class="two"><div class="bx">${it('page','VEGDESC',49)}</div><div class="bx">${it('pie','AREA_KM2',58)}${it('bars','sum',23)}</div></div>
 <div class="l" style="height:32px">${flow([[0,14,'<qg-check></qg-check>'],[18,128,T('Use only selected features',128)],[204,80,T('Clear',25),'height:21px;background:linear-gradient(#fdfdfd,#ebebeb);border:1px solid #aaa;border-radius:2px;padding-left:25px']])}</div>
 <div class="btn" style="height:21px;padding-right:2px">${T('Calculate',44)}</div></div>`);
define('qg-dialog',`:host{display:flex;flex-direction:column;width:802px;height:745px;background:#efefef;border:1px solid #5e5e5e;box-shadow:0 5px 18px 2px rgba(0,0,0,.38)}
 .t{height:30px;background:#fff;display:flex;align-items:center;flex:none;padding-bottom:1px}.b{display:flex;flex:1}.g{width:20px;padding:329px 0 0 11px}`,()=>`
 <div class="t">${flow([[8,16,I('q',16)],[29,61,T('Group Stats',61)],[681.500,9,'<i style="width:9px;height:1px;background:#000"></i>'],[726,11,'<svg width="11" height="11"><rect x=".5" y=".5" width="9" height="9" fill="none" stroke="#000"/></svg>'],[771.500,11,'<svg width="11" height="11"><path d="M.5.5l9.500 9.500M10 .5L.5 10" stroke="#000" fill="none"/></svg>']])}</div>
 <qg-menubar set="dlg" style="height:20px"></qg-menubar>
 <div class="b"><div style="padding:9px 0 0 9px"><qg-stat-table></qg-stat-table></div><div class="g">${dots(3,18)}</div><qg-control-panel></qg-control-panel></div>
 <div style="position:absolute;right:1px;bottom:1px;clip-path:polygon(100% 0,100% 100%,0 100%)">${dots(12,12)}</div>`);
/* ---------- status bar, task bar ---------- */
define('qg-status',`:host{display:flex;flex:none;align-items:center;height:28px;background:#efefef;padding-top:1px}`,()=>{
 const box='background:#fff;border:1px solid #aaa;border-radius:2px;height:22px;';
 const spin='<div style="width:14px;height:100%;border-left:1px solid #bbb;margin-left:auto;display:flex;flex-direction:column;align-items:center;justify-content:center;gap:5px"><svg width="7" height="4"><path d="M0 4h7L3.500 0z" fill="#555"/></svg><svg width="7" height="4"><path d="M0 0h7L3.500 4z" fill="#555"/></svg></div>';
 return flow([[4,200,`<div style="width:20px;padding-left:8px">${I('mg',13)}</div>${T('Szukana fraza (Ctrl+K)',110,'color:#777;margin-left:7px')}`,box],
 [1084,62.500,T('Współrzędne',62.500)],[1151,108,T('-4520567,3722772',92),box+'justify-content:center'],[1264,15,I('pos',15,16)],[1292,25,T('Skala',25)],
 [1321,80,T('1:7482861',52,'margin-left:3px')+'<div style="width:20px;height:100%;border-left:1px solid #bbb;margin-left:auto;display:flex;align-items:center;justify-content:center">'+dn()+'</div>',box],
 [1414,12,I('lock',12,16)],[1434,63.500,T('Powiększenie',63.500)],[1501,87,T('100%',28,'margin-left:4px')+spin,box],[1597,28,T('Obrót',28)],[1635,83,T('0,0 °',25,'margin-left:3px')+spin,box],
 [1725,14,'<qg-check on></qg-check>'],[1743,44,T('Renderuj',44)],[1805,15,I('crs',15,14)],[1824,54,T('EPSG:2964',54)],[1897,16,I('msg',16,14)]])});
define('qg-taskbar',`:host{display:flex;flex:none;height:30px;background:linear-gradient(90deg,#3f2f2e 0,#4a3a38 90px,#4c4341 260px,#4a3634 330px,#452c29 440px,#3a2321 500px,#251c1b 580px,#1f1a1a 700px,#2a1716 790px,#411b18 850px,#4a2a26 960px,#403c3b 1020px,#464646 1100px)}`,()=>{
 const a=[['win',18,17],['tsearch',54,17],['tview',90,16],['texp',129,17,1],['store',165.500,16],['wow',203,15],['wow2',240,15],['mail',277,17],['opera',314,17,2],['lol',351,15],['vs',388,17],['disc',425,14,1],['teams',462,17,1],['q',499,17,1],['q',536,17,3]];
 const it=a.map(([n,x,s,u])=>{const w=u===3?36:28;return[x-w/2,w,I(n,s),'justify-content:center;border-bottom:2px solid '+(u?'#76b9ed':'transparent')+';border-top:2px solid transparent;'+(u===3?'background:#6a625f;':'')]});
 return flow([...it,[1762,12,I('chev',12,12)],[1787,13,I('wifi',13,14)],[1808,17,I('vol',17,14)],[1834,28,T('02:56',27,'color:#fff')],[1878,17,I('note',17,18)],[1915,1,'','background:#888']].map(r=>[r[0],r[1],r[2],'height:30px;'+(r[3]||'')]))});
/* ---------- desktop ---------- */
define('qg-desktop',`:host{display:flex;flex-direction:column;width:1920px;height:1080px;position:relative;overflow:hidden}
 .t{height:23px;background:#fff;display:flex;align-items:center;color:#777;flex:none}.m{color:#8e8e8e;height:20px}.c{display:flex;height:863px;flex:none}.l{width:294px;display:flex;flex-direction:column;margin-right:6px}
 .sp{height:5px;flex:none;display:flex;justify-content:center;align-items:center}qg-map{flex:1;margin:1px 0 0;border:1px solid #b0b0b0;border-right:0;height:862px}
 qg-dialog{position:absolute;left:296px;top:195px}`,()=>`
 <div class="t">${flow([[2,16,I('q',16)],[23,143,T('*Projekt bez nazwy — QGIS',143)],[1799,10,'<i style="width:10px;height:1px;background:#888"></i>'],[1844,11,'<svg width="11" height="11"><path d="M.5 2.500h8v8h-8zM2.500 2.500v-2h8v8h-2" fill="none" stroke="#888"/></svg>'],[1889,11,'<svg width="11" height="11"><path d="M.5.5l10 10M10.500.5l-10 10" stroke="#888" fill="none"/></svg>']])}</div>
 <qg-menubar class="m" set="main"></qg-menubar>
 <qg-toolbar set="a" style="height:39px"></qg-toolbar><qg-toolbar set="b" style="height:39px"></qg-toolbar><qg-toolbar set="c" style="height:38px"></qg-toolbar>
 <div class="c"><div class="l"><qg-browser style="height:472px"></qg-browser><div class="sp">${dots(18,3)}</div><qg-layers style="height:386px"></qg-layers></div><qg-map></qg-map></div>
 <qg-status></qg-status><qg-taskbar></qg-taskbar><qg-dialog></qg-dialog>`);
</script>
</body></html>
